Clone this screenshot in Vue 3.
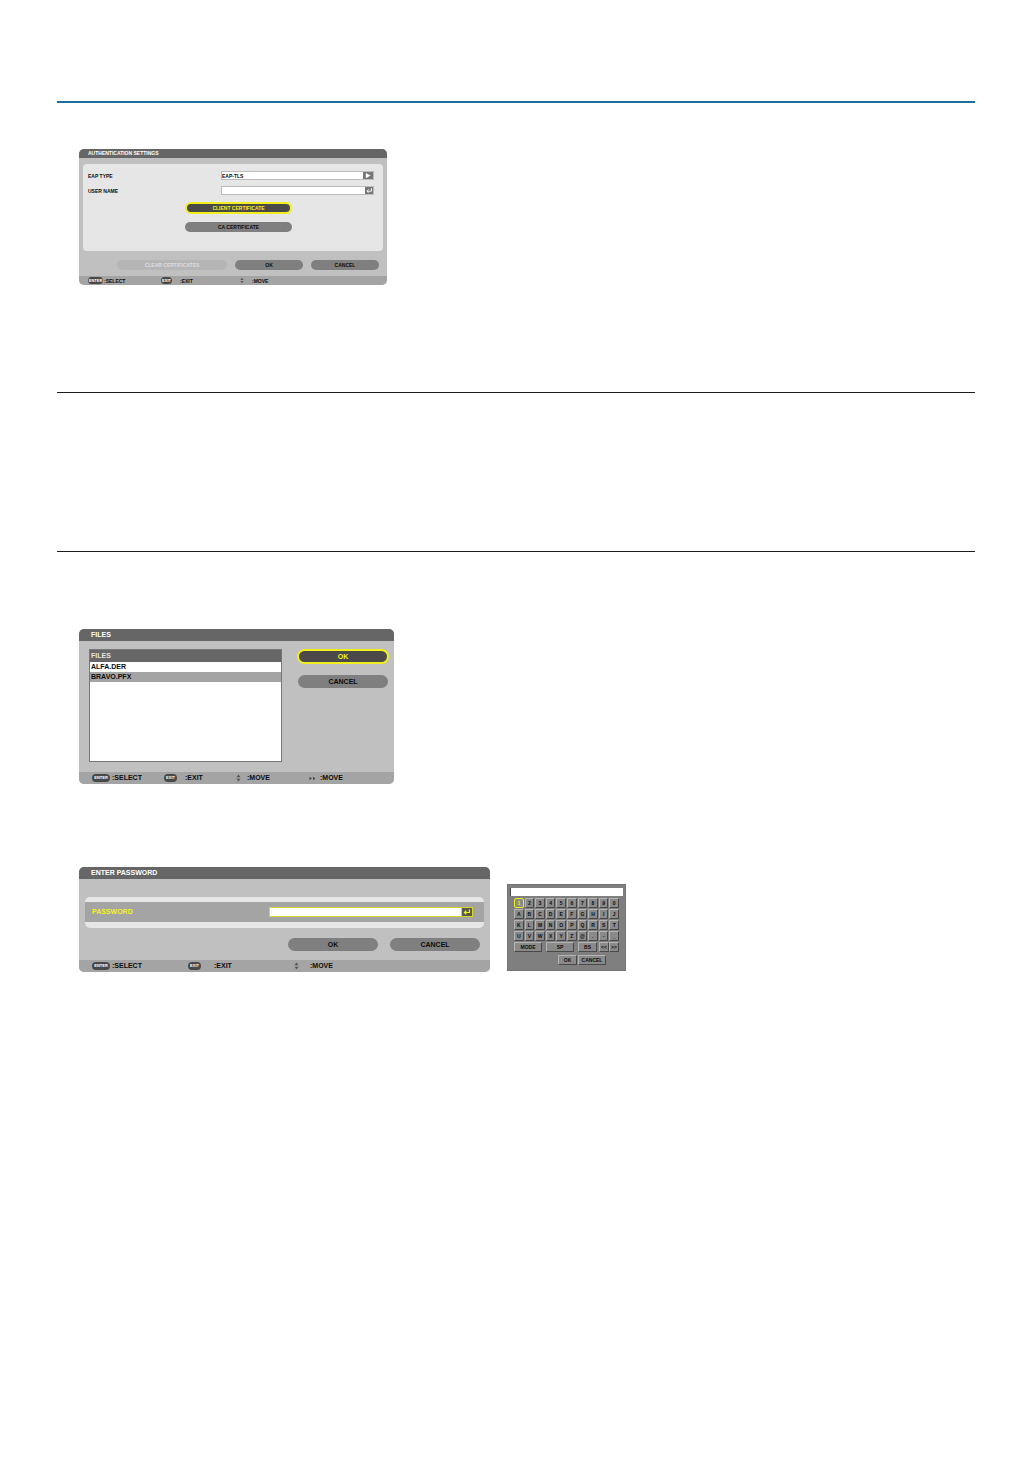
<script setup>
import { ref } from 'vue';

const eapType = ref('EAP-TLS');
const userName = ref('');
const password = ref('');
const entry = ref('');

const files = ['ALFA.DER', 'BRAVO.PFX'];
const selectedFile = ref('BRAVO.PFX');
const activeKey = ref('1');

const keys = [...'1234567890', ...'ABCDEFGHIJ', ...'KLMNOPQRST', ...'UVWXYZ@.-_'];

const press = (key) => {
  activeKey.value = key;
  entry.value += key;
};
</script>

<template>
  <main class="page">
    <hr class="rule rule-top">

    <section class="dialog auth">
      <h2 class="title">AUTHENTICATION SETTINGS</h2>
      <div class="auth-panel">
        <div class="row">
          <label for="eap">EAP TYPE</label>
          <div class="field">
            <select id="eap" v-model="eapType">
              <option>EAP-TLS</option>
            </select>
            <button class="field-button wide" aria-label="Open list">
              <svg viewBox="0 0 10 8"><path d="M2.5 1L8 4L2.5 7Z" fill="#fff" /></svg>
            </button>
          </div>
        </div>
        <div class="row">
          <label for="user">USER NAME</label>
          <div class="field">
            <input id="user" v-model="userName" type="text">
            <button class="field-button" aria-label="Edit user name">
              <svg viewBox="0 0 8 8"><path d="M6.8 1.5V4.8H2M3.6 2.9L1.6 4.8L3.6 6.7" fill="none" stroke="#fff" stroke-width="1.1" /></svg>
            </button>
          </div>
        </div>
        <div class="certificates">
          <button class="pill-button selected">CLIENT CERTIFICATE</button>
          <button class="pill-button">CA CERTIFICATE</button>
        </div>
      </div>
      <div class="actions">
        <button class="pill-button clear" disabled>CLEAR CERTIFICATES</button>
        <button class="pill-button">OK</button>
        <button class="pill-button">CANCEL</button>
      </div>
      <footer class="hints">
        <span class="hint"><kbd>ENTER</kbd>:SELECT</span>
        <span class="hint exit"><kbd>EXIT</kbd>:EXIT</span>
        <span class="hint move">
          <svg class="arrows" viewBox="0 0 5 8"><path d="M2.5 0.5L4.5 3.3H0.5ZM2.5 7.5L4.5 4.7H0.5Z" /></svg>:MOVE
        </span>
      </footer>
    </section>

    <hr class="rule rule-first">
    <hr class="rule rule-second">

    <section class="dialog files">
      <h2 class="title">FILES</h2>
      <div class="files-body">
        <div class="file-list">
          <table>
            <thead>
              <tr><th>FILES</th></tr>
            </thead>
            <tbody>
              <tr
                v-for="file in files"
                :key="file"
                :class="{ current: file === selectedFile }"
                @click="selectedFile = file"
              >
                <td>{{ file }}</td>
              </tr>
            </tbody>
          </table>
        </div>
        <div class="file-actions">
          <button class="pill-button selected">OK</button>
          <button class="pill-button">CANCEL</button>
        </div>
      </div>
      <footer class="hints">
        <span class="hint"><kbd>ENTER</kbd>:SELECT</span>
        <span class="hint exit"><kbd>EXIT</kbd>:EXIT</span>
        <span class="hint move">
          <svg class="arrows" viewBox="0 0 5 8"><path d="M2.5 0.5L4.5 3.3H0.5ZM2.5 7.5L4.5 4.7H0.5Z" /></svg>:MOVE
        </span>
        <span class="hint sideways">
          <svg class="arrows-side" viewBox="0 0 7 5"><path d="M0.5 0.7L3 2.5L0.5 4.3ZM4 0.7L6.5 2.5L4 4.3Z" /></svg>:MOVE
        </span>
      </footer>
    </section>

    <div class="password-area">
      <section class="dialog password">
        <h2 class="title">ENTER PASSWORD</h2>
        <div class="password-panel">
          <div class="password-row">
            <label for="password">PASSWORD</label>
            <div class="field">
              <input id="password" v-model="password" type="password">
              <button class="field-button" aria-label="Edit password">
                <svg viewBox="0 0 10 8"><path d="M7.5 1.5V4.5H3M4.3 2.8L2.5 4.5L4.3 6.2" fill="none" stroke="#f2f21c" stroke-width="1.2" /></svg>
              </button>
            </div>
          </div>
        </div>
        <div class="actions">
          <button class="pill-button">OK</button>
          <button class="pill-button">CANCEL</button>
        </div>
        <footer class="hints">
          <span class="hint"><kbd>ENTER</kbd>:SELECT</span>
          <span class="hint exit"><kbd>EXIT</kbd>:EXIT</span>
          <span class="hint move">
            <svg class="arrows" viewBox="0 0 5 8"><path d="M2.5 0.5L4.5 3.3H0.5ZM2.5 7.5L4.5 4.7H0.5Z" /></svg>:MOVE
          </span>
        </footer>
      </section>

      <section class="keyboard">
        <input v-model="entry" class="entry" type="text" aria-label="Characters">
        <div class="keys">
          <button
            v-for="key in keys"
            :key="key"
            class="key"
            :class="{ active: key === activeKey }"
            @click="press(key)"
          >{{ key }}</button>
        </div>
        <div class="key-row">
          <button class="key long">MODE</button>
          <button class="key long">SP</button>
          <button class="key back">BS</button>
          <button class="key">&lt;&lt;</button>
          <button class="key">&gt;&gt;</button>
        </div>
        <div class="key-actions">
          <button class="key">OK</button>
          <button class="key">CANCEL</button>
        </div>
      </section>
    </div>
  </main>
</template>

<style>
body {
  margin: 0;
  background: #fff;
}
</style>

<style scoped>
.page {
  padding: 101px 57px 40px;
  font-family: "Liberation Sans", Arial, sans-serif;
  font-weight: bold;
  color: #0c0c0c;
}

.page * {
  box-sizing: border-box;
}

button,
input,
select {
  margin: 0;
  padding: 0;
  border: 0;
  border-radius: 0;
  outline: 0;
  font: inherit;
  color: inherit;
  appearance: none;
}

.rule {
  height: 1px;
  margin: 0;
  border: 0;
  background: #1c1c1c;
}

.rule-top {
  height: 2px;
  background: #1b7098;
}

.rule-first {
  margin-top: 107px;
}

.rule-second {
  margin-top: 158px;
}

/* dialogs */
.dialog {
  display: flex;
  flex-direction: column;
  margin-left: 22px;
  border-radius: 5px;
  overflow: hidden;
  background: #c0c0c0;
  font-size: 7px;
  line-height: 8px;
}

.title {
  margin: 0;
  padding: 0 12px;
  background: #666;
  color: #fff;
  font-size: inherit;
  line-height: 12px;
}

.pill-button {
  display: flex;
  align-items: center;
  justify-content: center;
  height: 13px;
  border-radius: 7px;
  background: #7f7f7f;
}

.pill-button.selected {
  border: 2px solid #efef1e;
  background: #4b4949;
  color: #f2f21c;
}

.hints {
  display: grid;
  align-items: center;
  height: 12px;
  margin-top: auto;
  padding-left: 13px;
  background: #a4a4a4;
}

.hint {
  display: flex;
  align-items: center;
  gap: 2px;
}

.hint.exit {
  gap: 8px;
}

kbd {
  width: 18px;
  height: 8px;
  border-radius: 4px;
  background: #484848;
  color: #fff;
  font: bold 4px/8px "Liberation Sans", Arial, sans-serif;
  text-align: center;
}

.exit kbd {
  width: 13px;
}

.arrows {
  width: 5px;
  height: 8px;
  fill: #555;
}

.arrows-side {
  width: 7px;
  height: 5px;
  fill: #444;
}

.field {
  display: flex;
  height: 8px;
  border: 1px solid #bbb;
  background: #fff;
}

.field input,
.field select {
  flex: 1;
  min-width: 0;
  background: #fff;
}

.field-button {
  display: flex;
  width: 8px;
  background: #777;
}

.field-button.wide {
  width: 10px;
}

.field-button svg {
  width: 100%;
  height: 100%;
}

/* authentication settings */
.auth {
  width: 308px;
  height: 136px;
  margin-top: 46px;
  font-size: 5px;
  line-height: 6px;
}

.auth .title {
  padding: 0 9px;
  line-height: 9px;
}

.auth-panel {
  height: 87px;
  margin: 6px 4px 0;
  padding: 7px 9px 0 5px;
  border-radius: 4px;
  background: #e6e6e6;
}

.row {
  display: grid;
  grid-template-columns: 133px 1fr;
  align-items: center;
  height: 9px;
  margin-bottom: 6px;
}

.auth .field {
  height: 9px;
}

.auth .field-button {
  border-left: 0;
}

.certificates {
  display: grid;
  gap: 8px;
  width: 107px;
  margin: 7px 0 0 97px;
}

.auth .pill-button {
  height: 10px;
}

.auth .certificates .selected {
  height: 12px;
}

.auth .actions {
  display: grid;
  grid-template-columns: 110px 68px 68px;
  justify-content: end;
  gap: 8px;
  margin: 9px 8px 0;
}

.pill-button.clear {
  background: #b5b5b5;
  color: #dedede;
}

.auth .hints {
  grid-template-columns: 73px 79px 1fr;
  height: 9px;
  padding-left: 9px;
}

.auth .hint {
  gap: 1px;
}

.auth .hint.exit,
.auth .hint.move {
  gap: 8px;
}

.auth kbd {
  width: 15px;
  height: 7px;
  line-height: 7px;
}

.auth .exit kbd {
  width: 11px;
}

.auth .arrows {
  width: 4px;
  height: 7px;
}

/* file selection */
.files {
  width: 315px;
  height: 155px;
  margin-top: 77px;
}

.files-body {
  display: grid;
  grid-template-columns: 193px 92px;
  gap: 15px;
  padding: 8px 0 0 10px;
}

.file-list {
  height: 113px;
  border: 1px solid #777;
  background: #fff;
}

.file-list table {
  width: 100%;
  border-collapse: collapse;
}

.file-list th,
.file-list td {
  height: 10px;
  padding: 0 1px;
  text-align: left;
}

.file-list th {
  height: 12px;
  background: #666;
  color: #e4e4e4;
}

.file-list .current {
  background: #a4a4a4;
}

.file-actions {
  display: grid;
  align-content: start;
  gap: 11px;
}

.file-actions .selected {
  height: 15px;
  border-radius: 8px;
}

.file-actions .pill-button:last-child {
  margin: 0 1px;
}

.files .hints {
  grid-template-columns: 72px 72px 73px 1fr;
}

.files .move {
  gap: 6px;
}

.files .sideways {
  gap: 4px;
}

/* password */
.password-area {
  display: flex;
  align-items: flex-start;
  gap: 17px;
  margin-top: 83px;
}

.password {
  width: 411px;
  height: 105px;
}

.password-panel {
  height: 31px;
  margin: 18px 6px 0;
  padding: 5px 0 6px;
  border-radius: 5px;
  background: #e6e6e6;
}

.password-row {
  display: grid;
  grid-template-columns: 177px 204px;
  align-items: center;
  height: 20px;
  padding-left: 7px;
  background: #a4a4a4;
  color: #f2f21c;
}

.password .field {
  height: 10px;
  border-color: #d6d62c;
}

.password .field input {
  color: #0c0c0c;
}

.password .field-button {
  width: 11px;
  border-left: 1px solid #d6d62c;
  background: #5a5848;
}

.password .actions {
  display: grid;
  grid-template-columns: 90px 90px;
  justify-content: end;
  gap: 12px;
  margin: 10px 10px 0;
}

.password .hints {
  grid-template-columns: 96px 106px 1fr;
}

.password .hint.exit {
  gap: 13px;
}

.password .hint.move {
  gap: 11px;
}

/* on-screen keyboard */
.keyboard {
  width: 119px;
  height: 87px;
  margin-top: 17px;
  padding: 3px 2px;
  border: 1px solid #737373;
  background: #7f7f7f;
  font-size: 5px;
  line-height: 6px;
}

.keyboard .entry {
  display: block;
  width: 100%;
  height: 8px;
  border-left: 1px solid #444;
  background: #fff;
}

.keys {
  display: grid;
  grid-template-columns: repeat(10, 1fr);
  gap: 1px;
  margin: 2px 4px 0;
}

.key {
  display: flex;
  align-items: center;
  justify-content: center;
  height: 10px;
  border: 1px solid;
  border-color: #b4b4b4 #484848 #484848 #b4b4b4;
  border-radius: 1px;
  background: #8a8a8a;
}

.key.active {
  border-color: #efef1e;
  border-radius: 2px;
  color: #f2f21c;
}

.key-row {
  display: grid;
  grid-template-columns: 32px 32px 21px 10px 10px;
  margin: 1px 4px 0;
}

.key.long {
  margin-right: 4px;
}

.key.back {
  margin-right: 2px;
}

.key-actions {
  display: grid;
  grid-template-columns: 19px 28px;
  justify-content: end;
  gap: 1px;
  margin: 3px 17px 0;
}
</style>
